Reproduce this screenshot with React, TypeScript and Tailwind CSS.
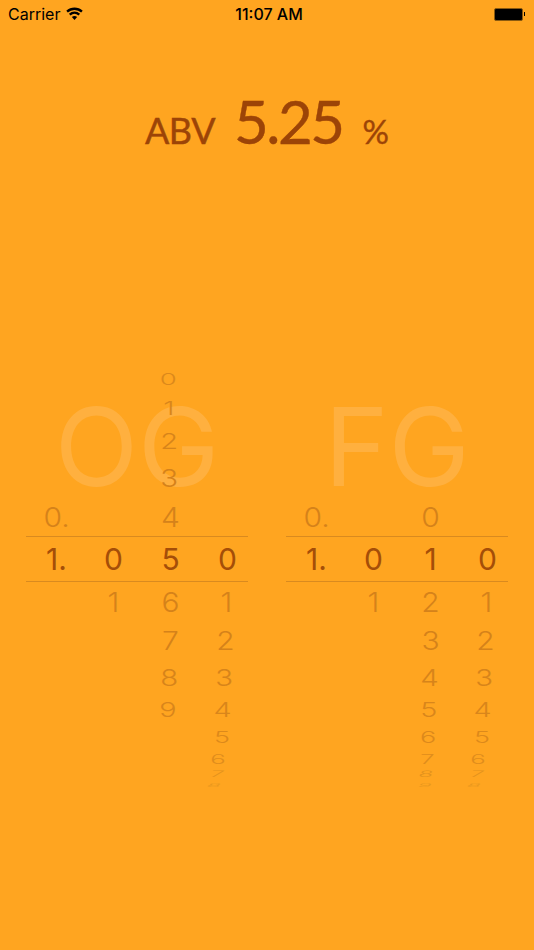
const rows = [
  { idx: -5, h: "h-[29px]", s: "scale-x-[.92] scale-y-[.52]", c: "text-[#dc891b]", x3: "-translate-x-[2px]", x4: "" },
  { idx: -4, h: "h-[30px]", s: "scale-x-[.95] scale-y-[.63]", c: "text-[#d9861b]", x3: "-translate-x-[2px]", x4: "" },
  { idx: -3, h: "h-[35px]", s: "scale-x-[.97] scale-y-[.72]", c: "text-[#d7841a]", x3: "-translate-x-[1px]", x4: "" },
  { idx: -2, h: "h-[39px]", s: "scale-x-[.98] scale-y-[.8]", c: "text-[#d5821a]", x3: "-translate-x-[1px]", x4: "" },
  { idx: -1, h: "h-[39px]", s: "scale-y-[.88]", c: "text-[#d5821a]", x3: "", x4: "" },
  { idx: 0, h: "h-[46px]", s: "", c: "text-[#a54e08]", x3: "", x4: "" },
  { idx: 1, h: "h-[39px]", s: "scale-y-[.9]", c: "text-[#d5821a]", x3: "", x4: "-translate-x-[1px]" },
  { idx: 2, h: "h-[39px]", s: "scale-y-[.83]", c: "text-[#d5821a]", x3: "", x4: "-translate-x-[2px]" },
  { idx: 3, h: "h-[35px]", s: "scale-x-[.98] scale-y-[.76]", c: "text-[#d7841a]", x3: "-translate-x-[1px]", x4: "-translate-x-[3px]" },
  { idx: 4, h: "h-[30px]", s: "scale-x-[.96] scale-y-[.68]", c: "text-[#d9861b]", x3: "-translate-x-[2px]", x4: "-translate-x-[5px]" },
  { idx: 5, h: "h-[24px]", s: "scale-x-[.9] scale-y-[.52]", c: "text-[#dc891b]", x3: "-translate-x-[2px]", x4: "-translate-x-[6px]" },
  { idx: 6, h: "h-[19px]", s: "scale-x-[.86] scale-y-[.42]", c: "text-[#df8d1c]", x3: "-translate-x-[3px]", x4: "-translate-x-[9px]" },
  { idx: 7, h: "h-[12px]", s: "scale-x-[.8] scale-y-[.3] -skew-x-[8deg]", c: "text-[#e3921d]", x3: "-translate-x-[4px]", x4: "-translate-x-[10px]" },
  { idx: 8, h: "h-[10px]", s: "scale-x-[.75] scale-y-[.17] -skew-x-[12deg]", c: "text-[#e8971e]", x3: "-translate-x-[5px]", x4: "-translate-x-[13px]" },
];

// digit for a wheel at a given row, empty when the wheel has nothing there
function wheelDigit(selected: number, idx: number) {
  const d = selected + idx;
  return d >= 0 && d <= 9 ? String(d) : "";
}

function Picker({ label, third }: { label: string; third: number }) {
  return (
    <div className="relative w-[222px]">
      <div className="absolute inset-x-0 top-[28px] text-center text-[109px] leading-[108px] font-normal text-[#ffb03f]">
        {label}
      </div>
      <div className="relative flex flex-col">
        {rows.map((r) => {
          const cells = [
            r.idx === -1 ? "0." : r.idx === 0 ? "1." : "",
            r.idx === 0 ? "0" : r.idx === 1 ? "1" : "",
            wheelDigit(third, r.idx),
            wheelDigit(0, r.idx),
          ];
          return (
            <div
              key={r.idx}
              className={`flex w-[222px] items-center pl-[2px] ${r.h} ${r.c} ${
                r.idx === 0 ? "border-y border-[#d98a1f]" : ""
              }`}
            >
              {cells.map((cell, i) => (
                <div key={i} className="w-[57px] shrink-0 flex justify-center">
                  <span
                    className={`block text-[30px] leading-none ${r.idx === 0 ? "font-normal" : "font-light"} ${r.s} ${
                      i === 2 ? r.x3 : i === 3 ? r.x4 : ""
                    }`}
                  >
                    {cell}
                  </span>
                </div>
              ))}
            </div>
          );
        })}
      </div>
    </div>
  );
}

export default function App() {
  return (
    <main className="h-[950px] w-full overflow-hidden bg-[#ffa520] font-['Inter',sans-serif]">
      {/* status bar */}
      <div className="relative flex h-[28px] items-center pl-[8px] pr-[9px] text-[16px] text-black">
        <span className="leading-none">Carrier</span>
        <svg className="ml-[6px] mb-[2px]" width="17" height="13" viewBox="0 0 16 12" fill="none" stroke="#000" strokeWidth="2.2">
          <path d="M1 4.2C5 .6 11 .6 15 4.2" />
          <path d="M3.5 7C6.2 4.6 9.8 4.6 12.5 7" />
          <path d="M8 12 5.5 9.3C7 8.1 9 8.1 10.5 9.3Z" fill="#000" stroke="none" />
        </svg>
        <span className="absolute inset-x-0 pl-[4px] text-center text-[16px] font-medium leading-none">11:07 AM</span>
        <div className="ml-auto flex items-center">
          <div className="h-[13px] w-[29px] rounded-[2px] border border-[#8a5a10] bg-black" />
          <div className="ml-[1px] h-[4px] w-[1.5px] bg-black" />
        </div>
      </div>

      {/* result */}
      <div className="mt-[63px] flex h-[70px] items-baseline justify-center font-['Lato',sans-serif] text-[#9c4407] [-webkit-text-stroke:0.4px_#9c4407]">
        <span className="text-[36px] leading-none tracking-[-0.5px]">ABV</span>
        <span className="ml-[19px] text-[60px] leading-none tracking-[-2.5px]">5.25</span>
        <span className="ml-[20px] text-[33px] leading-none">%</span>
      </div>

      {/* pickers */}
      <div className="mt-[203px] flex gap-[38px] px-[26px]">
        <Picker label="OG" third={5} />
        <Picker label="FG" third={1} />
      </div>
    </main>
  );
}
